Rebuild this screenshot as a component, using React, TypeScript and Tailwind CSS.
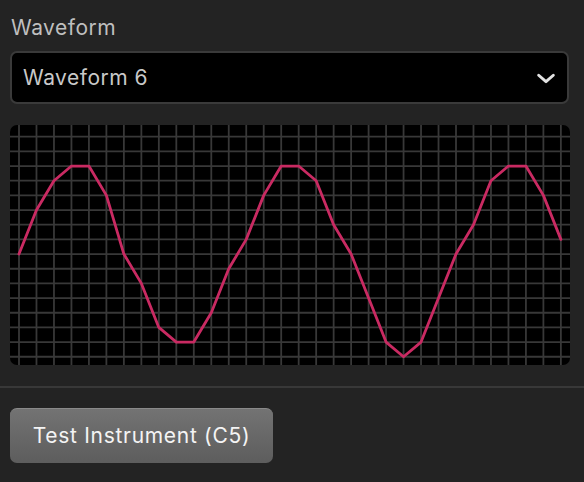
import React from "react";

const KY = [8, 5, 3, 2, 2, 4, 8, 10, 13, 14, 14, 12, 9, 7, 4, 2, 2, 3, 6, 8, 11, 14, 15, 14, 11, 8, 6, 3, 2, 2, 4, 7];
const GX = (k: number) => 9 + 17.48 * k;
const GY = (k: number) => 11.7 + 14.67 * k;

function Scope() {
  const pts = KY.map((ky, i) => `${GX(i).toFixed(2)},${GY(ky).toFixed(2)}`).join(" ");
  return (
    <svg width="560" height="240" viewBox="0 0 560 240" className="block">
      {Array.from({ length: 32 }, (_, k) => (
        <line key={"v" + k} x1={GX(k)} y1={0} x2={GX(k)} y2={240} stroke="#383838" strokeWidth={1.8} />
      ))}
      {Array.from({ length: 16 }, (_, k) => (
        <line key={"h" + k} x1={0} y1={GY(k)} x2={560} y2={GY(k)} stroke="#383838" strokeWidth={1.8} />
      ))}
      <polyline points={pts} fill="none" stroke="#c92a62" strokeWidth={2.8} strokeLinejoin="round" strokeLinecap="round" />
    </svg>
  );
}

export default function App() {
  return (
    <div
      className="w-[584px] h-[482px] bg-[#232323] overflow-hidden"
      style={{ fontFamily: "Inter, 'Liberation Sans', sans-serif" }}
    >
      <div className="px-[10px] pt-[16px]">
        <div className="text-[21px] leading-[24px] tracking-[0.5px] text-[#bfbfbf] pl-[1px]">Waveform</div>
        <div className="mt-[11px] h-[53px] w-[559px] rounded-[7px] border-2 border-[#3a3a3a] bg-black flex items-center justify-between pl-[11px] pr-[10px]">
          <span className="text-[21px] leading-[24px] tracking-[0.5px] text-[#c9c9c9]">Waveform 6</span>
          <svg width="22" height="22" viewBox="0 0 24 24" fill="none" stroke="#e2e2e2" strokeWidth={3.2} strokeLinecap="round" strokeLinejoin="round">
            <path d="M4 9l8 7 8-7" />
          </svg>
        </div>
        <div className="mt-[21px] h-[240px] w-[560px] rounded-[7px] bg-black overflow-hidden">
          <Scope />
        </div>
      </div>
      <div className="mt-[21px] h-[2px] w-full bg-[#383838]" />
      <div className="px-[10px] pt-[20px]">
        <button className="h-[55px] w-[263px] rounded-[7px] border-t border-[#8a8a8a] bg-gradient-to-b from-[#737373] to-[#5d5d5d] text-[21px] leading-[24px] tracking-[0.7px] text-[#f4f4f4] flex items-center justify-center">
          Test Instrument (C5)
        </button>
      </div>
    </div>
  );
}
